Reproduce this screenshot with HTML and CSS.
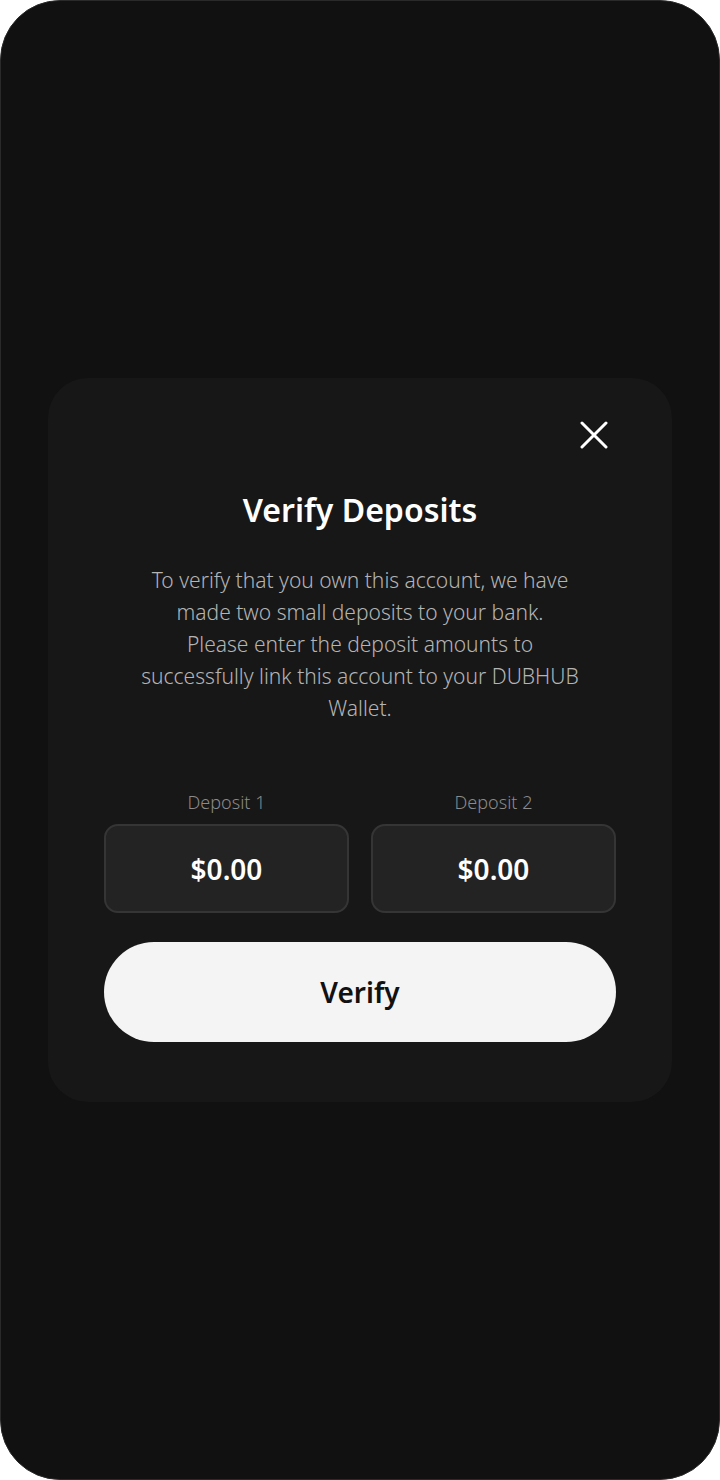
FILE: index.html
```html
<!DOCTYPE html>
<html lang="en">
<head>
	<meta charset="UTF-8">
	<meta name="viewport" content="width=device-width,user-scalable=no">
	<title>Verify Deposits</title>
	<link rel="stylesheet" href="styles.css">
</head>
<body>
	<div class="phone">
		<div class="modal">
			<div class="modalTop">
				<a href="javascript:;" class="close">
					<svg width="28" height="28" viewBox="0 0 28 28">
						<path d="M2 2L26 26M26 2L2 26" stroke="#fff" stroke-width="3" stroke-linecap="round"/>
					</svg>
				</a>
			</div>
			<h2 class="title">Verify Deposits</h2>
			<p class="desc">To verify that you own this account, we have<br>made two small deposits to your bank.<br>Please enter the deposit amounts to<br>successfully link this account to your DUBHUB<br>Wallet.</p>
			<div class="fields">
				<div class="field">
					<span class="label">Deposit 1</span>
					<div class="amount">$0.00</div>
				</div>
				<div class="field">
					<span class="label">Deposit 2</span>
					<div class="amount">$0.00</div>
				</div>
			</div>
			<a href="javascript:;" class="verifyBtn">Verify</a>
		</div>
	</div>
</body>
</html>
```

FILE: styles.css
```css
body,h2,p,a{
	margin: 0;padding: 0;
}
body{
	background: #fff;
	font-family: "Noto Sans", "Open Sans", sans-serif;
}
a{
	text-decoration: none;
}
.phone{
	height: 1480px;
	box-sizing: border-box;
	background: #111;
	border: 1px solid #2a2a2a;
	border-radius: 60px;
	display: flex;
	align-items: center;
	justify-content: center;
}
.modal{
	width: 624px;
	height: 724px;
	box-sizing: border-box;
	background: #171717;
	border-radius: 40px;
	padding: 40px 56px 0;
	display: flex;
	flex-direction: column;
	align-items: center;
}
.modalTop{
	align-self: stretch;
	display: flex;
	justify-content: flex-end;
	padding-right: 8px;
	height: 32px;
}
.close{
	display: block;
	width: 28px;
	height: 28px;
	margin-top: 3px;
}
.title{
	margin-top: 40px;
	color: #fff;
	font-size: 32px;
	font-weight: 600;
	line-height: 40px;
}
.desc{
	margin-top: 34px;
	width: 500px;
	text-align: center;
	color: #b4b4b4;
	font-size: 21px;
	font-weight: 300;
	line-height: 32px;
}
.fields{
	margin-top: 66px;
	align-self: stretch;
	display: flex;
	gap: 22px;
}
.field{
	flex: 1;
	display: flex;
	flex-direction: column;
	align-items: center;
	gap: 10px;
}
.label{
	color: #8a8a8a;
	font-size: 18px;
	font-weight: 300;
	line-height: 24px;
}
.amount{
	width: 100%;
	height: 89px;
	box-sizing: border-box;
	background: #232323;
	border: 2px solid #353535;
	border-radius: 14px;
	display: flex;
	align-items: center;
	justify-content: center;
	color: #fff;
	font-size: 28px;
	font-weight: 600;
}
.verifyBtn{
	margin-top: 29px;
	align-self: stretch;
	height: 100px;
	border-radius: 50px;
	background: #f4f4f4;
	color: #111;
	font-size: 28px;
	font-weight: 600;
	display: flex;
	align-items: center;
	justify-content: center;
}
```
